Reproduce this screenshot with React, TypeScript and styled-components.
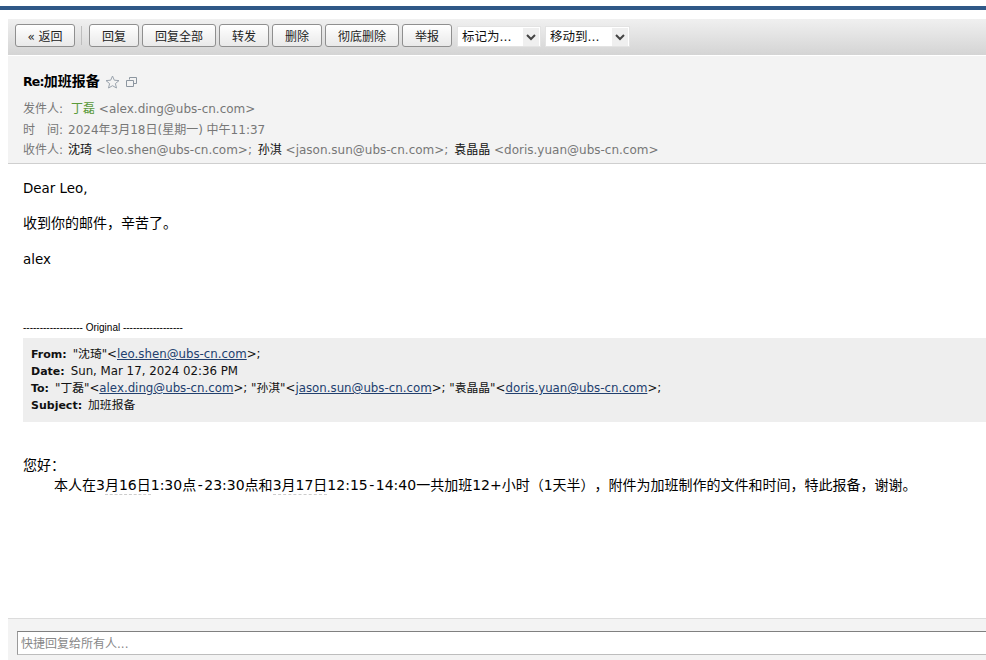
import React from "react";
import styled, { createGlobalStyle } from "styled-components";

const FONT = `"DejaVu Sans", "Noto Sans CJK SC", sans-serif`;

const Global = createGlobalStyle`
  html, body { margin: 0; padding: 0; background: #fff; overflow: hidden; }
  body { font-family: ${FONT}; color: #000; text-spacing-trim: space-all; }
`;

const Page = styled.div`
  width: 986px;
  height: 660px;
  overflow: hidden;
  display: flex;
  flex-direction: column;
  padding-top: 6px;
  box-sizing: border-box;
`;
const TopBand = styled.div`
  height: 4px;
  background: #2f5887;
  flex: none;
`;
const Main = styled.div`
  flex: 1;
  margin: 9px 0 0 8px;
  display: flex;
  flex-direction: column;
  min-height: 0;
`;
const Toolbar = styled.div`
  height: 37px;
  flex: none;
  box-sizing: border-box;
  padding: 5px 7px 0;
  display: flex;
  align-items: flex-start;
  background: linear-gradient(#f0f0f0, #d4d4d4);
  border-bottom: 1px solid #fff;
`;
const Btn = styled.div<{ $w: number; $gap?: number }>`
  width: ${(p) => p.$w}px;
  margin-right: ${(p) => p.$gap ?? 3}px;
  height: 23px;
  box-sizing: border-box;
  flex: none;
  border: 1px solid #8f8f8f;
  border-radius: 3px;
  background: linear-gradient(#fff, #e9e9e9);
  font: 12px/24px ${FONT};
  color: #222;
  text-align: center;
`;
const Sep = styled.div`
  width: 1px;
  height: 19px;
  margin: 2px 7px 0 0;
  background: #bdbdbd;
  flex: none;
`;
const SelectBox = styled.div<{ $w: number; $gap?: number }>`
  width: ${(p) => p.$w}px;
  margin-right: ${(p) => p.$gap ?? 0}px;
  height: 21px;
  margin-top: 2px;
  flex: none;
  box-sizing: border-box;
  background: #fff;
  border: 1px solid #e3e3e3;
  display: flex;
  align-items: center;
  justify-content: space-between;
  font: 12.5px/20px ${FONT};
  color: #111;
  padding: 0 1px 0 4px;
`;
const Arrow = styled.span`
  width: 16px;
  height: 18px;
  background: #efefef;
  display: flex;
  align-items: center;
  justify-content: center;
`;
const Header = styled.div`
  height: 108px;
  flex: none;
  box-sizing: border-box;
  background: #f3f3f3;
  border-bottom: 1px solid #cfcfcf;
  padding: 16px 0 0 15px;
`;
const Subject = styled.div`
  display: flex;
  align-items: center;
  gap: 5px;
  height: 18px;
  font: bold 14px/18px ${FONT};
  margin-bottom: 9px;
`;
const Re = styled.span`
  font-size: 12.5px;
  letter-spacing: -0.8px;
`;
const IconSvg = styled.svg`
  margin-top: 2px;
  flex: none;
`;
const Meta = styled.div`
  font: 12px/20.5px ${FONT};
  color: #777;
  white-space: nowrap;
`;
const MetaLabel = styled.span`
  display: inline-block;
  width: 45px;
`;
const Sender = styled.span`
  color: #5a9a3a;
  margin-left: 3px;
`;
const Name = styled.span<{ $gap?: number }>`
  color: #111;
  margin-left: ${(p) => p.$gap ?? 0}px;
`;
const Body = styled.div`
  flex: 1;
  min-height: 0;
  padding: 15px 0 0 15px;
  font: 13.4px/20px ${FONT};
`;
const Para = styled.div<{ $after: number; $size?: number }>`
  margin-bottom: ${(p) => p.$after}px;
  ${(p) => (p.$size ? `font-size: ${p.$size}px;` : "")}
`;
const OrigLine = styled.div`
  font: 10px/14px "Liberation Sans", sans-serif;
  margin-bottom: 3px;
`;
const Quote = styled.div`
  background: #eeeeee;
  padding: 8px 0 8px 8px;
  font: 11.8px/17px ${FONT};
  color: #111;
  white-space: nowrap;
  margin-bottom: 33px;
  height: 84px;
  box-sizing: border-box;
`;
const Label = styled.b`
  font-size: 11px;
  margin-right: 6px;
`;
const Mail = styled.span`
  color: #22406e;
  text-decoration: underline;
`;
const Greeting = styled.div`
  font: 14px/20px ${FONT};
`;
const Indent = styled.div`
  font: 14px/20px ${FONT};
  text-indent: 31px;
  white-space: nowrap;
`;
const DateMark = styled.span`
  border-bottom: 1px dashed #ccc;
  padding-bottom: 1px;
`;
const Dash = styled.span`
  margin: 0 1.5px;
`;
const Footer = styled.div`
  height: 42px;
  flex: none;
  box-sizing: border-box;
  background: #f3f3f3;
  border-top: 1px solid #dcdcdc;
  padding: 12px 0 0 9px;
`;
const Quick = styled.div`
  height: 24px;
  box-sizing: border-box;
  border-top: 1px solid #808080;
  border-left: 1px solid #9a9a9a;
  border-bottom: 1px solid #bdbdbd;
  background: #fff;
  font: 12px/24px ${FONT};
  color: #888;
  padding-left: 3px;
`;

const Chevron = () => (
  <svg width="10" height="8" viewBox="0 0 10 8">
    <path d="M1 2 L5 6 L9 2" fill="none" stroke="#444" strokeWidth="2" />
  </svg>
);

export default function App() {
  return (
    <Page>
      <Global />
      <TopBand />
      <Main>
        <Toolbar>
          <Btn $w={60} $gap={6}>« 返回</Btn>
          <Sep />
          <Btn $w={50}>回复</Btn>
          <Btn $w={74}>回复全部</Btn>
          <Btn $w={50}>转发</Btn>
          <Btn $w={50}>删除</Btn>
          <Btn $w={74}>彻底删除</Btn>
          <Btn $w={50} $gap={5}>举报</Btn>
          <SelectBox $w={84} $gap={4}>标记为...<Arrow><Chevron /></Arrow></SelectBox>
          <SelectBox $w={85}>移动到...<Arrow><Chevron /></Arrow></SelectBox>
        </Toolbar>
        <Header>
          <Subject>
            <span><Re>Re:</Re>加班报备</span>
            <IconSvg width="15" height="14" viewBox="0 0 15 14">
              <path d="M7.5 1 L9.3 5.2 L14 5.6 L10.4 8.6 L11.5 13 L7.5 10.7 L3.5 13 L4.6 8.6 L1 5.6 L5.7 5.2 Z" fill="none" stroke="#9aa3ad" />
            </IconSvg>
            <IconSvg width="13" height="12" viewBox="0 0 13 12">
              <path d="M4.5 3.5 V1.5 H11.5 V7.5 H8.5 M1.5 4.5 H8.5 V10.5 H1.5 Z" fill="none" stroke="#8c96a0" />
            </IconSvg>
          </Subject>
          <Meta><MetaLabel>发件人:</MetaLabel><Sender>丁磊</Sender> &lt;alex.ding@ubs-cn.com&gt;</Meta>
          <Meta><MetaLabel>时　间:</MetaLabel>2024年3月18日(星期一) 中午11:37</Meta>
          <Meta><MetaLabel>收件人:</MetaLabel><Name>沈琦</Name> &lt;leo.shen@ubs-cn.com&gt;; <Name $gap={2}>孙淇</Name> &lt;jason.sun@ubs-cn.com&gt;; <Name $gap={2}>袁晶晶</Name> &lt;doris.yuan@ubs-cn.com&gt;</Meta>
        </Header>
        <Body>
          <Para $after={14}>Dear Leo,</Para>
          <Para $after={17} $size={14}>收到你的邮件，辛苦了。</Para>
          <Para $after={51}>alex</Para>
          <OrigLine>------------------ Original ------------------</OrigLine>
          <Quote>
            <div><Label>From:</Label>"沈琦"&lt;<Mail>leo.shen@ubs-cn.com</Mail>&gt;;</div>
            <div><Label>Date:</Label>Sun, Mar 17, 2024 02:36 PM</div>
            <div><Label>To:</Label>"丁磊"&lt;<Mail>alex.ding@ubs-cn.com</Mail>&gt;; "孙淇"&lt;<Mail>jason.sun@ubs-cn.com</Mail>&gt;; "袁晶晶"&lt;<Mail>doris.yuan@ubs-cn.com</Mail>&gt;;</div>
            <div><Label>Subject:</Label>加班报备</div>
          </Quote>
          <Greeting>您好：</Greeting>
          <Indent>本人在3<DateMark>月16日</DateMark>1:30点<Dash>-</Dash>23:30点和<DateMark>3月17日</DateMark>12:15<Dash>-</Dash>14:40一共加班12+小时（1天半），附件为加班制作的文件和时间，特此报备，谢谢。</Indent>
        </Body>
        <Footer>
          <Quick>快捷回复给所有人...</Quick>
        </Footer>
      </Main>
    </Page>
  );
}
